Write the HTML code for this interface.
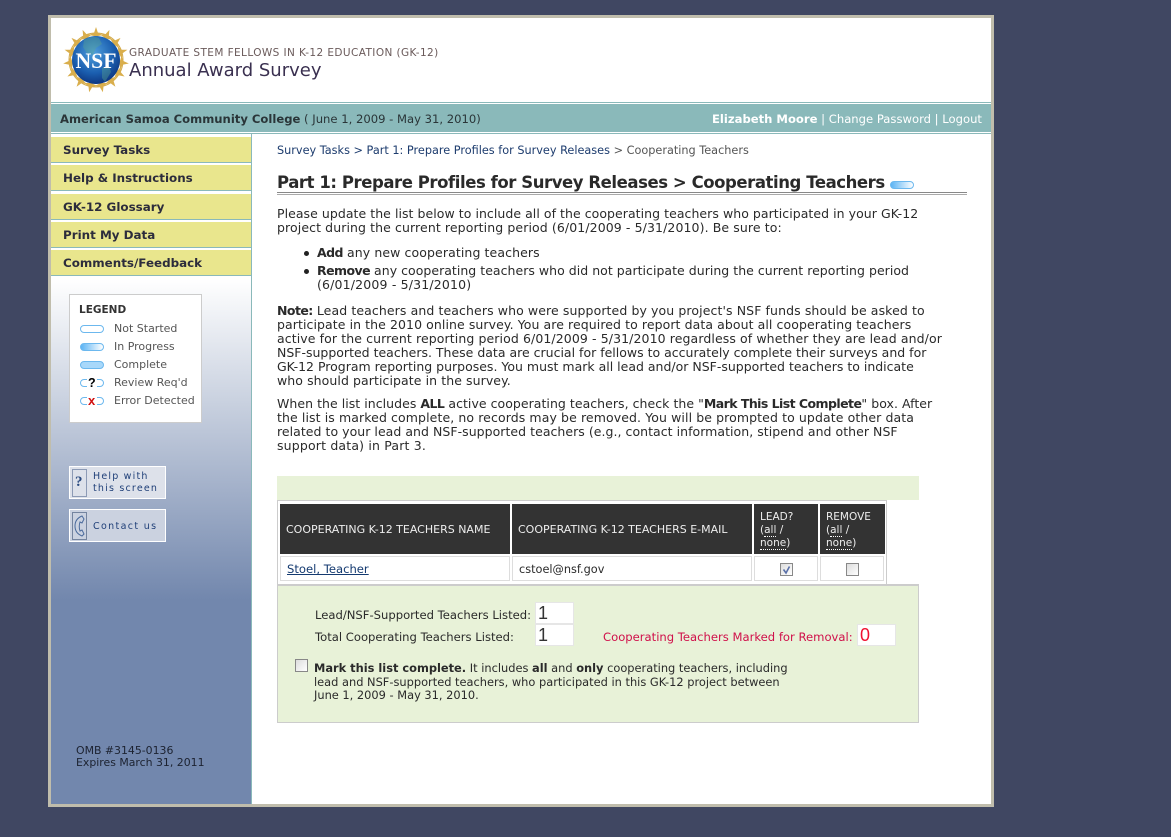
<!DOCTYPE html>
<html><head><meta charset="utf-8"><title>Annual Award Survey</title>
<style>
html,body{margin:0;padding:0;width:1171px;height:837px;overflow:hidden;background:#404762;font-family:"DejaVu Sans","Liberation Sans",sans-serif;color:#2a2a2a}
.a{position:absolute}
.t{position:absolute;white-space:nowrap;line-height:14px;font-size:12.5px}
.nav{position:absolute;left:51px;width:200px;background:#e9e68d;border-bottom:1px solid #8ab9ba;font-weight:bold;font-size:11.9px;color:#2c2c3c;box-sizing:border-box;padding-left:12px}
.b{font-weight:bold}
.s{font-weight:bold;letter-spacing:-.55px}
.pill{position:absolute;left:80px;width:22px;height:6px;border:1px solid #6cb8ee;border-radius:5px;background:#fff}
.lg{position:absolute;left:114px;font-size:11px;color:#555;white-space:nowrap;line-height:14px}
.th{position:absolute;background:#333;color:#eee;font-size:11px;line-height:13px;white-space:nowrap}
.td{position:absolute;border:1px solid #ddd;box-sizing:border-box;background:#fff;font-size:11.3px}
.cb{position:absolute;width:11px;height:11px;border:1px solid #888;background:linear-gradient(135deg,#ddd,#fff)}
.inp{position:absolute;background:#fff;border:1px solid #e6e6e6;box-sizing:border-box;font-family:"Liberation Sans",sans-serif;font-size:18px;line-height:21px;padding-left:2px;color:#333}
.dot{border-bottom:1px dotted #fff}
</style></head><body>
<div class="a" style="left:48px;top:15px;width:940px;height:786px;border:3px solid #c0bdac;background:#fff"></div>

<svg class="a" style="left:61px;top:25px" width="70" height="70" viewBox="-35 -35 70 70">
<defs><radialGradient id="g" cx="45%" cy="35%" r="70%"><stop offset="0" stop-color="#4f9fdc"/><stop offset=".6" stop-color="#1b5fb0"/><stop offset="1" stop-color="#0b2f78"/></radialGradient></defs>
<circle r="27" fill="none" stroke="#d3aa4a" stroke-width="1"/>
<g fill="#d9ae4c">
<path transform="rotate(0)" d="M0-33L2-27L7-25L2-24L0-19L-2-24L-7-25L-2-27Z"/>
<path transform="rotate(24)" d="M0-33L2-27L7-25L2-24L0-19L-2-24L-7-25L-2-27Z"/>
<path transform="rotate(48)" d="M0-33L2-27L7-25L2-24L0-19L-2-24L-7-25L-2-27Z"/>
<path transform="rotate(72)" d="M0-33L2-27L7-25L2-24L0-19L-2-24L-7-25L-2-27Z"/>
<path transform="rotate(96)" d="M0-33L2-27L7-25L2-24L0-19L-2-24L-7-25L-2-27Z"/>
<path transform="rotate(120)" d="M0-33L2-27L7-25L2-24L0-19L-2-24L-7-25L-2-27Z"/>
<path transform="rotate(144)" d="M0-33L2-27L7-25L2-24L0-19L-2-24L-7-25L-2-27Z"/>
<path transform="rotate(168)" d="M0-33L2-27L7-25L2-24L0-19L-2-24L-7-25L-2-27Z"/>
<path transform="rotate(192)" d="M0-33L2-27L7-25L2-24L0-19L-2-24L-7-25L-2-27Z"/>
<path transform="rotate(216)" d="M0-33L2-27L7-25L2-24L0-19L-2-24L-7-25L-2-27Z"/>
<path transform="rotate(240)" d="M0-33L2-27L7-25L2-24L0-19L-2-24L-7-25L-2-27Z"/>
<path transform="rotate(264)" d="M0-33L2-27L7-25L2-24L0-19L-2-24L-7-25L-2-27Z"/>
<path transform="rotate(288)" d="M0-33L2-27L7-25L2-24L0-19L-2-24L-7-25L-2-27Z"/>
<path transform="rotate(312)" d="M0-33L2-27L7-25L2-24L0-19L-2-24L-7-25L-2-27Z"/>
<path transform="rotate(336)" d="M0-33L2-27L7-25L2-24L0-19L-2-24L-7-25L-2-27Z"/>
</g>
<circle r="24" fill="url(#g)"/>
<path d="M-12-20q8-5 15-2l3 6-6 4-3 7-6-2-4-6z M6 8l7-2 2 6-6 10-3-4z" fill="#5aa58f" opacity=".4"/>
<text x="0" y="8" text-anchor="middle" font-family="Liberation Serif,serif" font-size="22" font-weight="bold" fill="#fff" textLength="41" lengthAdjust="spacingAndGlyphs">NSF</text>
</svg>
<div class="t" style="left:129px;top:46px;font-size:10.500px;color:#6a5a5a;letter-spacing:.41px">GRADUATE STEM FELLOWS IN K-12 EDUCATION (GK-12)</div>
<div class="t" style="left:129px;top:60px;font-size:18px;line-height:22px;color:#3a3050">Annual Award Survey</div>

<div class="a" style="left:51px;top:102px;width:940px;height:1px;background:#8ab9ba"></div>
<div class="a" style="left:51px;top:104px;width:940px;height:28px;background:#8ab9ba"></div>
<div class="a" style="left:51px;top:133px;width:940px;height:1px;background:#8ab9ba"></div>
<div class="t" style="left:60px;top:112px;font-size:11.600px;color:#2a3538"><span class="b">American Samoa Community College</span> ( June 1, 2009 - May 31, 2010)</div>
<div class="t" style="left:712px;top:112px;font-size:11.600px;color:#fff"><span class="b">Elizabeth Moore</span> | Change Password | Logout</div>

<div class="a" style="left:51px;top:134px;width:200px;height:670px;background:linear-gradient(to bottom,#fff 0,#fff 145px,#7287ad 466px,#7287ad 100%)"></div>
<div class="a" style="left:251px;top:134px;width:1px;height:670px;background:#8ab9ba"></div>
<div class="nav" style="top:137px;height:26px;line-height:26px">Survey Tasks</div>
<div class="nav" style="top:165px;height:26px;line-height:26px">Help &amp; Instructions</div>
<div class="nav" style="top:194px;height:26px;line-height:26px">GK-12 Glossary</div>
<div class="nav" style="top:222px;height:26px;line-height:26px">Print My Data</div>
<div class="nav" style="top:250px;height:26px;line-height:26px">Comments/Feedback</div>

<div class="a" style="left:69px;top:294px;width:131px;height:127px;background:#fff;border:1px solid #ccc"></div>
<div class="t" style="left:79px;top:303px;font-size:10.500px;font-weight:bold;color:#333">LEGEND</div>
<div class="pill" style="top:325px"></div>
<div class="pill" style="top:343px;background:linear-gradient(to right,#5cb4f4,#fff)"></div>
<div class="pill" style="top:361px;background:#a8d8fa"></div>
<div class="pill" style="top:379px"></div><div class="a" style="left:87px;top:377px;width:10px;height:12px;background:#fff"></div>
<div class="t b" style="left:88px;top:376px;font-size:12.500px;color:#000;font-family:'Liberation Sans',sans-serif">?</div>
<div class="pill" style="top:397px"></div><div class="a" style="left:87px;top:395px;width:10px;height:12px;background:#fff"></div>
<div class="t b" style="left:88px;top:394px;font-size:13px;color:#d01010;font-family:'Liberation Sans',sans-serif">x</div>
<div class="lg" style="top:322px">Not Started</div>
<div class="lg" style="top:340px">In Progress</div>
<div class="lg" style="top:358px">Complete</div>
<div class="lg" style="top:376px">Review Req'd</div>
<div class="lg" style="top:394px">Error Detected</div>

<div class="a" style="left:69px;top:466px;width:95px;height:31px;background:#dde1ea;border:1px solid #fff"></div>
<div class="a" style="left:72px;top:469px;width:13px;height:26px;border:1px solid #8c9ab5"></div>
<div class="t b" style="left:75px;top:475px;font-size:15px;color:#2a4a80;font-family:'Liberation Serif',serif">?</div>
<div class="t" style="left:93px;top:471px;font-size:9.500px;line-height:12px;color:#1f3f78;letter-spacing:1.2px">Help with<br>this screen</div>
<div class="a" style="left:69px;top:509px;width:95px;height:31px;background:#cbd2e0;border:1px solid #fff"></div>
<div class="a" style="left:72px;top:512px;width:13px;height:26px;border:1px solid #74849f"></div>
<svg class="a" style="left:73px;top:514px" width="14" height="24" viewBox="0 0 14 24"><path d="M9 2C4 4 2 8 2 12s2 8 7 10l2-2-2-4-2 1c-1-3-1-6 0-9l2 1 2-4z" fill="none" stroke="#4a6a9c" stroke-width="1"/></svg>
<div class="t" style="left:93px;top:521px;font-size:9.500px;line-height:12px;color:#1f3f78;letter-spacing:1.35px">Contact us</div>

<div class="t" style="left:76px;top:745px;font-size:10.900px;line-height:12px;color:#1c2230">OMB #3145-0136<br>Expires March 31, 2011</div>

<div class="t" style="left:277px;top:144px;font-size:11.280px;color:#555"><span style="color:#1d3c6e">Survey Tasks &gt; Part 1: Prepare Profiles for Survey Releases</span> &gt; Cooperating Teachers</div>
<div class="t b" style="left:277px;top:173px;font-size:16.500px;line-height:20px;letter-spacing:-.44px;color:#2a2a2a">Part 1: Prepare Profiles for Survey Releases &gt; Cooperating Teachers</div>
<div class="pill" style="left:890px;top:181px;background:linear-gradient(to right,#5cb4f4,#fff)"></div>
<div class="a" style="left:277px;top:192px;width:690px;height:1px;background:#888"></div>
<div class="a" style="left:277px;top:194px;width:690px;height:1px;background:#aaa"></div>

<div class="t" style="left:277px;top:207px;letter-spacing:.05px">Please update the list below to include all of the cooperating teachers who participated in your GK-12</div>
<div class="t" style="left:277px;top:221px;letter-spacing:.1px">project during the current reporting period (6/01/2009 - 5/31/2010). Be sure to:</div>
<div class="a" style="left:304px;top:251px;width:5px;height:5px;border-radius:50%;background:#222"></div>
<div class="t" style="left:317px;top:246px;letter-spacing:.1px"><span class="s">Add</span> any new cooperating teachers</div>
<div class="a" style="left:304px;top:269px;width:5px;height:5px;border-radius:50%;background:#222"></div>
<div class="t" style="left:317px;top:264px;letter-spacing:.03px"><span class="s">Remove</span> any cooperating teachers who did not participate during the current reporting period</div>
<div class="t" style="left:317px;top:278px;letter-spacing:.17px">(6/01/2009 - 5/31/2010)</div>
<div class="t" style="left:277px;top:304px;letter-spacing:.1px"><span class="s">Note:</span> Lead teachers and teachers who were supported by you project's NSF funds should be asked to</div>
<div class="t" style="left:277px;top:318px;letter-spacing:.08px">participate in the 2010 online survey. You are required to report data about all cooperating teachers</div>
<div class="t" style="left:277px;top:332px;letter-spacing:.1px">active for the current reporting period 6/01/2009 - 5/31/2010 regardless of whether they are lead and/or</div>
<div class="t" style="left:277px;top:346px">NSF-supported teachers. These data are crucial for fellows to accurately complete their surveys and for</div>
<div class="t" style="left:277px;top:360px">GK-12 Program reporting purposes. You must mark all lead and/or NSF-supported teachers to indicate</div>
<div class="t" style="left:277px;top:374px;letter-spacing:.08px">who should participate in the survey.</div>
<div class="t" style="left:277px;top:397px;letter-spacing:.04px">When the list includes <span class="s">ALL</span> active cooperating teachers, check the "<span class="s">Mark This List Complete</span>" box. After</div>
<div class="t" style="left:277px;top:411px;letter-spacing:.1px">the list is marked complete, no records may be removed. You will be prompted to update other data</div>
<div class="t" style="left:277px;top:425px;letter-spacing:.04px">related to your lead and NSF-supported teachers (e.g., contact information, stipend and other NSF</div>
<div class="t" style="left:277px;top:439px;letter-spacing:.17px">support data) in Part 3.</div>

<div class="a" style="left:277px;top:476px;width:642px;height:24px;background:#e8f2d8"></div>
<div class="a" style="left:277px;top:500px;width:608px;height:83px;border:1px solid #ccc;background:#fff"></div>
<div class="th" style="left:280px;top:504px;width:230px;height:50px;line-height:52px"><span style="margin-left:6px">COOPERATING K-12 TEACHERS NAME</span></div>
<div class="th" style="left:512px;top:504px;width:240px;height:50px;line-height:52px"><span style="margin-left:6px">COOPERATING K-12 TEACHERS E-MAIL</span></div>
<div class="th" style="left:754px;top:504px;width:64px;height:50px;font-size:10.500px"><div style="padding:7px 0 0 6px">LEAD?<br>(<span class="dot">all</span> /<br><span class="dot">none</span>)</div></div>
<div class="th" style="left:820px;top:504px;width:65px;height:50px;font-size:10.500px"><div style="padding:7px 0 0 6px">REMOVE<br>(<span class="dot">all</span> /<br><span class="dot">none</span>)</div></div>
<div class="td" style="left:280px;top:556px;width:230px;height:25px;line-height:24px;padding-left:6px"><span style="color:#143a70;text-decoration:underline;font-size:11.600px">Stoel, Teacher</span></div>
<div class="td" style="left:512px;top:556px;width:240px;height:25px;line-height:25px;padding-left:6px">cstoel@nsf.gov</div>
<div class="td" style="left:754px;top:556px;width:64px;height:25px"></div>
<div class="td" style="left:820px;top:556px;width:64px;height:25px"></div>
<div class="cb" style="left:780px;top:563px"></div>
<svg class="a" style="left:780px;top:563px" width="13" height="13"><path d="M3.500 6.500l2.500 3.500 3.500-6.500" fill="none" stroke="#5a70a8" stroke-width="1.600"/></svg>
<div class="cb" style="left:846px;top:563px"></div>

<div class="a" style="left:277px;top:584px;width:640px;height:136px;background:#e8f2d8;border:1px solid #ccc;border-top:2px solid #ccc"></div>
<div class="t" style="left:315px;top:608px;font-size:11.600px">Lead/NSF-Supported Teachers Listed:</div>
<div class="t" style="left:315px;top:630px;font-size:11.600px">Total Cooperating Teachers Listed:</div>
<div class="t" style="left:603px;top:630px;font-size:11.600px;color:#d0104a">Cooperating Teachers Marked for Removal:</div>
<div class="inp" style="left:535px;top:602px;width:39px;height:22px">1</div>
<div class="inp" style="left:535px;top:624px;width:39px;height:22px">1</div>
<div class="inp" style="left:857px;top:624px;width:39px;height:22px;color:#f01030">0</div>
<div class="cb" style="left:295px;top:659px"></div>
<div class="t" style="left:314px;top:661px;font-size:11.400px"><span class="b">Mark this list complete.</span> It includes <span class="b">all</span> and <span class="b">only</span> cooperating teachers, including</div>
<div class="t" style="left:314px;top:675px;font-size:11.400px">lead and NSF-supported teachers, who participated in this GK-12 project between</div>
<div class="t" style="left:314px;top:688px;font-size:11.400px">June 1, 2009 - May 31, 2010.</div>
</body></html>
